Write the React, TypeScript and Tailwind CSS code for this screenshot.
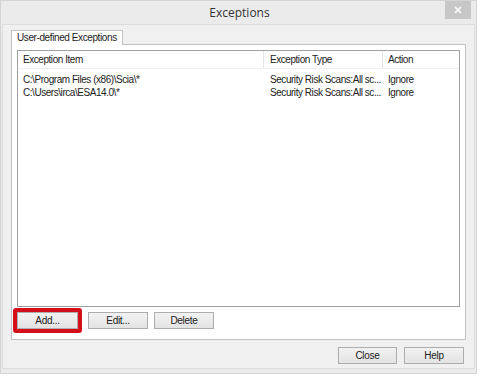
import React from 'react';

const rows = [
  { item: 'C:\\Program Files (x86)\\Scia\\*', type: 'Security Risk Scans:All sc...', action: 'Ignore' },
  { item: 'C:\\Users\\irca\\ESA14.0\\*', type: 'Security Risk Scans:All sc...', action: 'Ignore' },
];

const Btn: React.FC<{ label: string; w: string }> = ({ label, w }) => (
  <button className={`${w} h-[17px] block border border-[#adadad] bg-[linear-gradient(#f2f2f2,#e3e3e3)] text-[10px] tracking-[-0.3px] text-[#222] leading-none`}>
    {label}
  </button>
);

export default function App() {
  return (
    <div className="w-[480px] h-[376px] bg-white font-['Liberation_Sans',sans-serif]">
      <div className="w-[477px] h-[374px] bg-[#ebebeb] border border-[#d4d4d4] flex flex-col">
        {/* title bar */}
        <div className="h-[23px] flex items-center relative">
          <div className="flex-1 text-center text-[12px] text-[#333] pl-[2px] font-['Open_Sans',sans-serif]">Exceptions</div>
          <div className="absolute right-[5px] top-0 w-[26px] h-[18px] bg-[#c7c7c7] flex items-center justify-center">
            <svg width="8" height="8" viewBox="0 0 8 8">
              <path d="M1 1L7 7M7 1L1 7" stroke="#fff" strokeWidth="1.6" />
            </svg>
          </div>
        </div>
        {/* client area */}
        <div className="flex-1 mx-[1px] mb-[4px] bg-[#f0f0f0] border border-[#dcdcdc] flex flex-col px-[8px] pt-[4px]">
          <div className="flex">
            <div className="h-[15px] px-[5px] border border-b-0 border-[#c2c2c2] bg-white text-[10px] tracking-[-0.4px] text-[#222] leading-[14px] relative top-[1px] whitespace-nowrap">
              User-defined Exceptions
            </div>
          </div>
          <div className="h-[296px] bg-white border border-[#c2c2c2] px-[5px] pt-[5px] flex flex-col">
            <div className="h-[257px] shrink-0 border border-[#a0a0a0] flex flex-col text-[10px] tracking-[-0.45px] text-[#222] whitespace-nowrap">
              <div className="flex h-[18px] items-center border-b border-[#f0f0f0]">
                <div className="w-[246px] pl-[5px] border-r border-[#e5e5e5] h-full flex items-center">Exception Item</div>
                <div className="w-[119px] pl-[6px] border-r border-[#e5e5e5] h-full flex items-center">Exception Type</div>
                <div className="flex-1 pl-[5px] h-full flex items-center">Action</div>
              </div>
              <div className="pt-[4px]">
                {rows.map((r) => (
                  <div key={r.item} className="flex h-[13px] items-center">
                    <div className="w-[246px] pl-[5px]">{r.item}</div>
                    <div className="w-[119px] pl-[6px]">{r.type}</div>
                    <div className="flex-1 pl-[5px]">{r.action}</div>
                  </div>
                ))}
              </div>
            </div>
            <div className="flex gap-[6px] mt-[5px] items-center">
              <div className="flex rounded-[3px] border-[4px] border-[#d40f1a] -ml-[4px] -my-[4px]">
                <Btn label="Add..." w="w-[61px]" />
              </div>
              <Btn label="Edit..." w="w-[60px]" />
              <Btn label="Delete" w="w-[60px]" />
            </div>
          </div>
          <div className="flex justify-end gap-[7px] mt-[7px] pr-[2px]">
            <Btn label="Close" w="w-[59px]" />
            <Btn label="Help" w="w-[60px]" />
          </div>
        </div>
      </div>
    </div>
  );
}
